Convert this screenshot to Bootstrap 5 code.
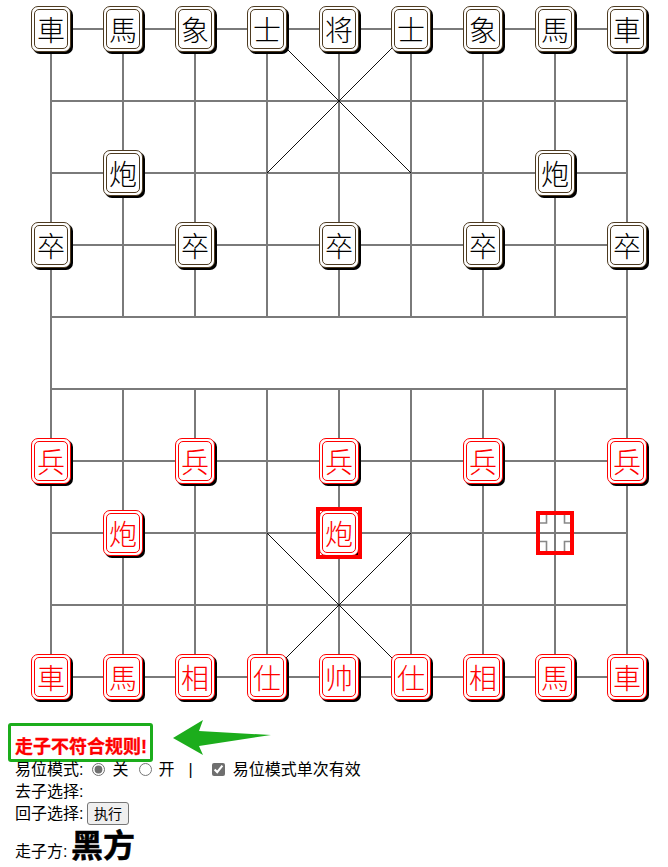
<!doctype html>
<html lang="zh">
<head>
<meta charset="utf-8">
<link href="https://cdn.jsdelivr.net/npm/bootstrap@5.3.0/dist/css/bootstrap.min.css" rel="stylesheet">
<style>
html,body{background:#fff}
body{margin:0;font-family:"Liberation Sans","Noto Sans CJK SC",sans-serif;font-size:16px;line-height:21.5px;color:#000}
.xq-board{position:relative;width:668px;height:715px}
.xq-lines{position:absolute;left:0;top:0}
.xq-piece{position:absolute;width:40px;height:46px;margin:-23px 0 0 -20px;background:#fff;border:1px solid;border-radius:7px;box-shadow:2px 2px 0 #000;padding:2px}
.xq-face{display:flex;align-items:center;justify-content:center;height:100%;border:1px solid;border-radius:5px;font-family:"Noto Sans CJK TC","Noto Sans CJK SC",sans-serif;font-size:28px;line-height:1;font-weight:300}
.xq-black{border-color:#4d3a20;color:#000}
.xq-black .xq-face{border-color:#4d3a20}
.xq-red{border-color:#f00;color:#f00}
.xq-red .xq-face{border-color:#f00}
.xq-sel{position:absolute;width:46px;height:52px;margin:-26px 0 0 -23px;border:4px solid #f00}
.xq-target{position:absolute;width:38px;height:44px;margin:-22px 0 0 -19px;border:4px solid #f00}
.c0{left:51px}.c1{left:123px}.c2{left:195px}.c3{left:267px}.c4{left:339px}.c5{left:411px}.c6{left:483px}.c7{left:555px}.c8{left:627px}
.r0{top:29px}.r2{top:173px}.r3{top:245px}.r6{top:461px}.r7{top:533px}.r9{top:677px}
.xq-msgrow{padding:8px 0 0 8px;height:44px}
.xq-msg{width:145px;height:39px;border:3px solid #1cad1c;border-radius:3px;padding:10px 0 0 4px;font-weight:700;font-size:18px;line-height:22px;color:#f00;white-space:nowrap;-webkit-text-stroke:.3px #f00}
.xq-arrow{overflow:visible}
.xq-controls{padding-left:15px}
.xq-opt{margin:0 7px 0 9px;vertical-align:-1px;accent-color:#6f6f6f}
.xq-opt2{margin:0 6px 0 11px;vertical-align:-1px;accent-color:#6f6f6f}
.xq-chk{margin:0 8px 0 0;vertical-align:-1px;accent-color:#6f6f6f}
.xq-sep{margin:0 19px 0 14px}
.xq-btn{font:14px "Noto Sans CJK SC",sans-serif;padding:1px 6px;height:23px;line-height:19px;border:1px solid #767676;border-radius:3px;background:#efefef;color:#000;vertical-align:0;margin-left:-1px}
.xq-btnrow{height:21.5px}
.xq-turn{font-size:32px;font-weight:700;line-height:38px;-webkit-text-stroke:.5px #000;margin-left:-1px}
.xq-turnrow{margin-top:3px;line-height:38px}
</style>
</head>
<body>
<div class="xq-board">
<svg class="xq-lines" width="668" height="715" viewBox="0 0 668 715">
<g stroke="#7a7a7a" stroke-width="2" shape-rendering="crispEdges" fill="none">
<path d="M51 29H627M51 101H627M51 173H627M51 245H627M51 317H627M51 389H627M51 461H627M51 533H627M51 605H627M51 677H627"/>
<path d="M51 29V677M627 29V677"/>
<path d="M123 29V317M195 29V317M267 29V317M339 29V317M411 29V317M483 29V317M555 29V317"/>
<path d="M123 389V677M195 389V677M267 389V677M339 389V677M411 389V677M483 389V677M555 389V677"/>
</g>
<path d="M540 523H546.5V515M571 523H564.5V515M540 541.5H546.5V551M571 541.5H564.5V551" stroke="#888" stroke-width="1.6" fill="none"/>
<path d="M267 29L411 173M411 29L267 173M267 533L411 677M411 533L267 677" stroke="#111" stroke-width="1" fill="none"/>
</svg>

<div class="xq-piece xq-black c0 r0"><div class="xq-face">車</div></div>
<div class="xq-piece xq-black c1 r0"><div class="xq-face">馬</div></div>
<div class="xq-piece xq-black c2 r0"><div class="xq-face">象</div></div>
<div class="xq-piece xq-black c3 r0"><div class="xq-face">士</div></div>
<div class="xq-piece xq-black c4 r0"><div class="xq-face">将</div></div>
<div class="xq-piece xq-black c5 r0"><div class="xq-face">士</div></div>
<div class="xq-piece xq-black c6 r0"><div class="xq-face">象</div></div>
<div class="xq-piece xq-black c7 r0"><div class="xq-face">馬</div></div>
<div class="xq-piece xq-black c8 r0"><div class="xq-face">車</div></div>
<div class="xq-piece xq-black c1 r2"><div class="xq-face">炮</div></div>
<div class="xq-piece xq-black c7 r2"><div class="xq-face">炮</div></div>
<div class="xq-piece xq-black c0 r3"><div class="xq-face">卒</div></div>
<div class="xq-piece xq-black c2 r3"><div class="xq-face">卒</div></div>
<div class="xq-piece xq-black c4 r3"><div class="xq-face">卒</div></div>
<div class="xq-piece xq-black c6 r3"><div class="xq-face">卒</div></div>
<div class="xq-piece xq-black c8 r3"><div class="xq-face">卒</div></div>

<div class="xq-piece xq-red c0 r6"><div class="xq-face">兵</div></div>
<div class="xq-piece xq-red c2 r6"><div class="xq-face">兵</div></div>
<div class="xq-piece xq-red c4 r6"><div class="xq-face">兵</div></div>
<div class="xq-piece xq-red c6 r6"><div class="xq-face">兵</div></div>
<div class="xq-piece xq-red c8 r6"><div class="xq-face">兵</div></div>
<div class="xq-piece xq-red c1 r7"><div class="xq-face">炮</div></div>
<div class="xq-piece xq-red c4 r7"><div class="xq-face">炮</div></div>
<div class="xq-sel c4 r7"></div>
<div class="xq-target c7 r7"></div>
<div class="xq-piece xq-red c0 r9"><div class="xq-face">車</div></div>
<div class="xq-piece xq-red c1 r9"><div class="xq-face">馬</div></div>
<div class="xq-piece xq-red c2 r9"><div class="xq-face">相</div></div>
<div class="xq-piece xq-red c3 r9"><div class="xq-face">仕</div></div>
<div class="xq-piece xq-red c4 r9"><div class="xq-face">帅</div></div>
<div class="xq-piece xq-red c5 r9"><div class="xq-face">仕</div></div>
<div class="xq-piece xq-red c6 r9"><div class="xq-face">相</div></div>
<div class="xq-piece xq-red c7 r9"><div class="xq-face">馬</div></div>
<div class="xq-piece xq-red c8 r9"><div class="xq-face">車</div></div>
</div>

<div class="xq-msgrow d-flex align-items-start">
<div class="xq-msg">走子不符合规则!</div>
<svg class="ms-3 xq-arrow" width="102" height="38" viewBox="0 0 102 38"><polygon points="4,15 34,-3 30,8 102,12 30,23 34,32" fill="#1cad1c"/></svg>
</div>
<div class="xq-controls">
<div>易位模式:<input class="xq-opt" type="radio" name="m" checked>关<input class="xq-opt2" type="radio" name="m">开<span class="xq-sep">|</span><input class="xq-chk" type="checkbox" checked>易位模式单次有效</div>
<div>去子选择:</div>
<div class="xq-btnrow">回子选择: <button class="xq-btn" type="button">执行</button></div>
<div class="xq-turnrow">走子方: <span class="xq-turn">黑方</span></div>
</div>
</body>
</html>
